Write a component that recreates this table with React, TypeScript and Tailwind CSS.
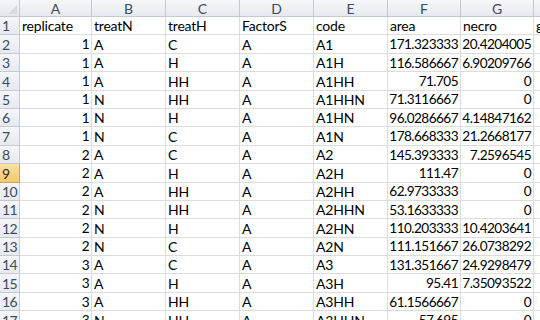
const cols = ['A', 'B', 'C', 'D', 'E', 'F', 'G', 'H'];
const widths = ['w-[72px]', 'w-[74px]', 'w-[74px]', 'w-[74px]', 'w-[74px]', 'w-[73px]', 'w-[73px]', 'w-[40px]'];

type Cell = string | number;

const rows: Cell[][] = [
  ['replicate', 'treatN', 'treatH', 'FactorS', 'code', 'area', 'necro', 'g'],
  [1, 'A', 'C', 'A', 'A1', '171.323333', '20.4204005'],
  [1, 'A', 'H', 'A', 'A1H', '116.586667', '6.90209766'],
  [1, 'A', 'HH', 'A', 'A1HH', '71.705', '0'],
  [1, 'N', 'HH', 'A', 'A1HHN', '71.3116667', '0'],
  [1, 'N', 'H', 'A', 'A1HN', '96.0286667', '4.14847162'],
  [1, 'N', 'C', 'A', 'A1N', '178.668333', '21.2668177'],
  [2, 'A', 'C', 'A', 'A2', '145.393333', '7.2596545'],
  [2, 'A', 'H', 'A', 'A2H', '111.47', '0'],
  [2, 'A', 'HH', 'A', 'A2HH', '62.9733333', '0'],
  [2, 'N', 'HH', 'A', 'A2HHN', '53.1633333', '0'],
  [2, 'N', 'H', 'A', 'A2HN', '110.203333', '10.4203641'],
  [2, 'N', 'C', 'A', 'A2N', '111.151667', '26.0738292'],
  [3, 'A', 'C', 'A', 'A3', '131.351667', '24.9298479'],
  [3, 'A', 'H', 'A', 'A3H', '95.41', '7.35093522'],
  [3, 'A', 'HH', 'A', 'A3HH', '61.1566667', '0'],
  [3, 'N', 'HH', 'A', 'A3HHN', '57.695', '0'],
];

// numeric columns are right aligned, like Excel does
const isNum = (r: number, c: number) => r > 0 && (c === 0 || c === 5 || c === 6);

export default function App() {
  return (
    <div
      className="w-[540px] h-[320px] overflow-hidden bg-white text-black"
      style={{ fontFamily: 'Lato, "Liberation Sans", sans-serif' }}
    >
      {/* column headers */}
      <div className="flex h-[17px]">
        <div className="relative w-[20px] shrink-0 bg-gradient-to-b from-[#f4f6f9] to-[#e3e7ed] border-r border-b border-[#c5cad2]">
          <div className="absolute right-[2px] bottom-[2px] w-0 h-0 border-l-[9px] border-l-transparent border-b-[9px] border-b-[#d6dbe2]" />
        </div>
        {cols.map((c, i) => (
          <div
            key={c}
            className={`${widths[i]} shrink-0 flex items-center justify-center bg-gradient-to-b from-[#f6f7f9] to-[#e6e9ee] border-r border-b border-[#c5cad2] text-[14px] text-[#3d4b5c]`}
          >
            {c}
          </div>
        ))}
      </div>

      {rows.map((row, r) => {
        const active = r === 8;
        return (
          <div key={r} className="flex h-[18.4px]">
            <div
              className={`w-[20px] shrink-0 flex items-end pb-[1px] pl-[2px] border-r border-b text-[14px] leading-none tracking-[-0.5px] ${
                active
                  ? 'bg-gradient-to-b from-[#f9e1a4] to-[#f5c86b] border-[#c9a45a] text-[#2e2a1c]'
                  : 'bg-gradient-to-b from-[#f4f6f9] to-[#e6e9ee] border-[#c5cad2] text-[#3d4b5c]'
              }`}
            >
              {r + 1}
            </div>
            {cols.map((_, c) => {
              const v = row[c];
              const num = isNum(r, c);
              return (
                <div
                  key={c}
                  className={`${widths[c]} shrink-0 flex items-end pb-[1px] px-[2px] border-r border-b border-[#dadcdd] leading-none whitespace-nowrap overflow-hidden ${
                    num ? 'justify-end text-[13.6px] tracking-[-0.55px]' : 'justify-start text-[14px] tracking-[-0.2px]'
                  }`}
                >
                  {v !== undefined ? String(v) : ''}
                </div>
              );
            })}
          </div>
        );
      })}
    </div>
  );
}
